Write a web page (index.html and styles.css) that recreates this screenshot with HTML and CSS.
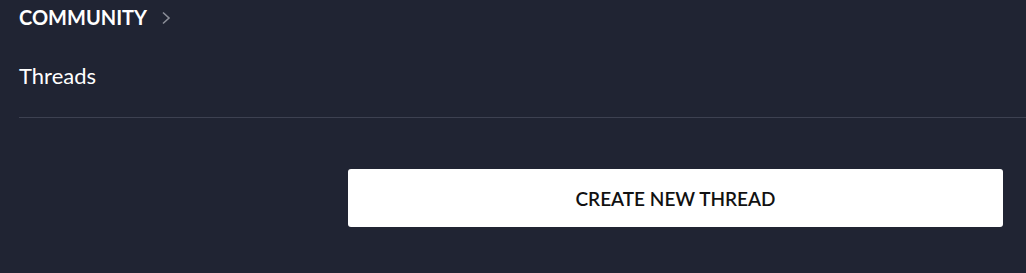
FILE: index.html
```html
<!DOCTYPE html>
<html lang="en">
  <head>
    <meta charset="UTF-8" />
    <meta name="viewport" content="width=device-width, initial-scale=1.0" />
    <title>Community Threads</title>
    <link rel="stylesheet" href="styles.css">
  </head>
  <body>
    <div class="page">
      <div class="breadcrumb">
        <span class="crumb">COMMUNITY</span>
        <svg class="chevron" width="10" height="14" viewBox="0 0 10 14">
          <path d="M2 1.5 L8 7 L2 12.5" fill="none" stroke="#8b8e98" stroke-width="1.6" />
        </svg>
      </div>
      <h1 class="page-title">Threads</h1>
      <hr class="divider" />
      <div class="actions">
        <button class="create-btn">CREATE NEW THREAD</button>
      </div>
    </div>
  </body>
</html>
```

FILE: styles.css
```css
* {
  margin: 0;
  padding: 0;
  box-sizing: border-box;
  font-family: Lato, "Open Sans", sans-serif;
}
body {
  background-color: #202433;
  color: #fff;
  overflow: hidden;
}
.page {
  padding-left: 19px;
}
.breadcrumb {
  display: flex;
  align-items: center;
  gap: 14px;
  height: 34px;
}
.crumb {
  font-size: 20px;
  font-weight: 700;
}
.chevron {
  margin-top: 1px;
}
.page-title {
  font-size: 22px;
  font-weight: 400;
  margin-top: 29px;
  line-height: 26px;
}
.divider {
  border: none;
  border-top: 1px solid #3d4151;
  margin-top: 28px;
}
.actions {
  display: flex;
  justify-content: flex-end;
  padding-right: 23px;
  margin-top: 51px;
}
.create-btn {
  width: 655px;
  height: 58px;
  background: #fff;
  border: none;
  border-radius: 3px;
  font-size: 19px;
  font-weight: 600;
  color: #111;
  cursor: pointer;
}
```
